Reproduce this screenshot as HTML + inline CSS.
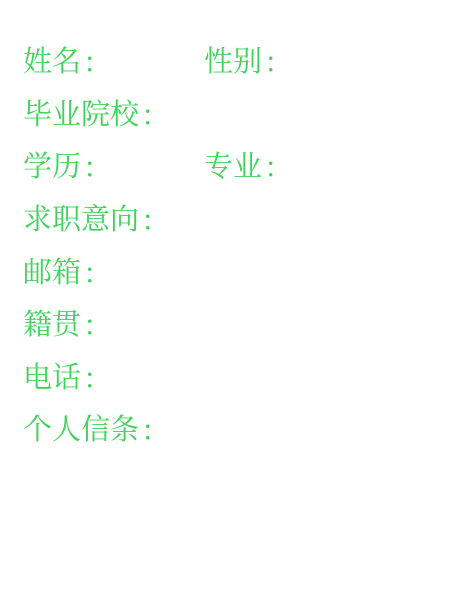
<!DOCTYPE html>
<html><head><meta charset="utf-8"><style>
body{margin:0;width:460px;height:600px;background:#fff;font-family:"Noto Serif CJK SC",serif;color:#3fd35b;font-size:29px;}
.r{position:absolute;left:23px;height:30px;line-height:30px;white-space:nowrap}
.c{position:absolute;left:181px}
i{font-style:normal;margin-left:4px}
</style></head><body>
<div class="r" style="top:45px">姓名<i>:</i><span class="c">性别<i>:</i></span></div>
<div class="r" style="top:98px">毕业院校<i>:</i></div>
<div class="r" style="top:150px">学历<i>:</i><span class="c">专业<i>:</i></span></div>
<div class="r" style="top:203px">求职意向<i>:</i></div>
<div class="r" style="top:256px">邮箱<i>:</i></div>
<div class="r" style="top:308px">籍贯<i>:</i></div>
<div class="r" style="top:361px">电话<i>:</i></div>
<div class="r" style="top:413px">个人信条<i>:</i></div>
</body></html>
